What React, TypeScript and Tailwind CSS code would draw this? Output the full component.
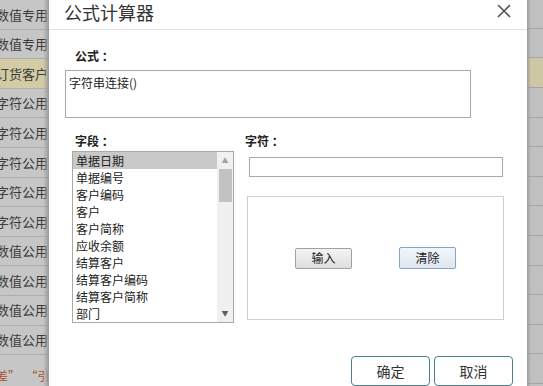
import { useState } from "react";

const bgRows = [
  { text: "数值专用自定义", yellow: false },
  { text: "数值专用自定义", yellow: false },
  { text: "订货客户", yellow: true },
  { text: "字符公用自定义", yellow: false },
  { text: "字符公用自定义", yellow: false },
  { text: "字符公用自定义", yellow: false },
  { text: "字符公用自定义", yellow: false },
  { text: "字符公用自定义", yellow: false },
  { text: "数值公用自定义", yellow: false },
  { text: "数值公用自定义", yellow: false },
  { text: "数值公用自定义", yellow: false },
  { text: "数值公用自定义", yellow: false },
];

const fields = [
  "单据日期",
  "单据编号",
  "客户编码",
  "客户",
  "客户简称",
  "应收余额",
  "结算客户",
  "结算客户编码",
  "结算客户简称",
  "部门",
];

const font = { fontFamily: '"Noto Sans CJK SC", "Liberation Sans", sans-serif' };

function BackdropLeft() {
  return (
    <div className="w-[49px] shrink-0 overflow-hidden bg-[#c6c6c6] relative">
      {bgRows.map((r, i) => (
        <div
          key={i}
          className={`h-[29.6px] flex items-center border-b border-[#adadad] whitespace-nowrap text-[13px] text-[#3b3b3b] -ml-[4px] ${
            r.yellow ? "bg-[#d2cba3]" : ""
          }`}
        >
          {r.text}
        </div>
      ))}
      <div className="pt-[12px] -ml-[4px] whitespace-nowrap text-[12px] text-[#a8532a]">
        差”&nbsp;&nbsp;“引用
      </div>
      <div className="absolute inset-y-0 right-0 w-[6px] bg-gradient-to-r from-transparent to-[#9a9a9a]" />
    </div>
  );
}

function BackdropRight() {
  return (
    <div className="flex-1 bg-[#c0c0c0] relative overflow-hidden">
      <div className="h-[29px] border-b border-[#a5a5a5]" />
      <div className="h-[29px] border-b border-[#a5a5a5]" />
      <div className="h-[30px] border-b border-[#a5a5a5] bg-[#cdc7a3]" />
      {Array.from({ length: 10 }).map((_, i) => (
        <div key={i} className="h-[29.6px] border-b border-[#a5a5a5]" />
      ))}
      <div className="absolute inset-y-0 left-0 w-[4px] bg-gradient-to-r from-[#9c9c9c] to-transparent" />
    </div>
  );
}

function ListBox() {
  return (
    <div className="mt-[3px] w-[162px] h-[172px] border border-[#a9a9a9] flex bg-white">
      <div className="flex-1">
        {fields.map((f, i) => (
          <div
            key={f}
            className={`h-[17px] leading-[17px] pl-[3px] text-[12px] text-[#222] ${
              i === 0 ? "bg-[#c9c9c9]" : ""
            }`}
          >
            {f}
          </div>
        ))}
      </div>
      <div className="w-[16px] bg-[#f0f0f0] flex flex-col items-center">
        <div className="h-[17px] flex items-center justify-center text-[7px] text-[#a3a3a3]">▲</div>
        <div className="w-[13px] h-[33px] bg-[#c2c2c2]" />
        <div className="flex-1" />
        <div className="h-[17px] flex items-center justify-center text-[7px] text-[#606060]">▼</div>
      </div>
    </div>
  );
}

export default function App() {
  const [formula] = useState("字符串连接()");
  return (
    <div className="w-[543px] h-[386px] flex overflow-hidden" style={font}>
      <BackdropLeft />
      <div className="w-[478px] shrink-0 bg-white flex flex-col">
        <div className="h-[30px] border-b border-[#e2e2e2] flex items-start justify-between pl-[15px] pr-[15px]">
          <span className="text-[18px] leading-[24px] text-[#333]">公式计算器</span>
          <svg width="16" height="16" viewBox="0 0 16 16" className="mt-[3px]">
            <path d="M2 2 L14 14 M14 2 L2 14" stroke="#555" strokeWidth="1.6" />
          </svg>
        </div>

        <div className="pl-[26px] mt-[19px] text-[12px] leading-[14px] font-bold text-[#222]">公式 ：</div>
        <div className="ml-[16px] mt-[7px] w-[406px] h-[48px] border border-[#a9a9a9] px-[3px] pt-[4px] text-[12px] leading-[16px] text-[#222]">
          {formula}
        </div>

        <div className="flex mt-[16px]">
          <div className="ml-[23px] flex flex-col">
            <div className="pl-[3px] text-[12px] leading-[14px] font-bold text-[#222]">字段 ：</div>
            <ListBox />
          </div>
          <div className="ml-[11px] flex flex-col">
            <div className="text-[12px] leading-[14px] font-bold text-[#222]">字符 ：</div>
            <div className="ml-[4px] mt-[9px] w-[254px] h-[20px] border border-[#a9a9a9]" />
            <div className="ml-[2px] mt-[19px] w-[257px] h-[124px] border border-[#cfcfcf] flex items-center justify-center gap-[47px]">
              <button className="w-[57px] h-[21px] border border-[#a0a0a0] rounded-[2px] bg-gradient-to-b from-[#f4f4f4] to-[#dedede] text-[12px] text-[#222]">
                输入
              </button>
              <button className="w-[57px] h-[22px] border border-[#7fa6d3] rounded-[2px] bg-gradient-to-b from-[#f2f6fb] to-[#dfe6ee] text-[12px] text-[#222]">
                清除
              </button>
            </div>
          </div>
        </div>

        <div className="flex justify-end gap-[4px] pr-[14px] mt-[33px]">
          <button className="w-[79px] h-[30px] border border-[#4c7f8c] rounded-[4px] bg-white text-[14px] text-[#333]">
            确定
          </button>
          <button className="w-[79px] h-[30px] border border-[#4c7f8c] rounded-[4px] bg-white text-[14px] text-[#333]">
            取消
          </button>
        </div>
      </div>
      <BackdropRight />
    </div>
  );
}
